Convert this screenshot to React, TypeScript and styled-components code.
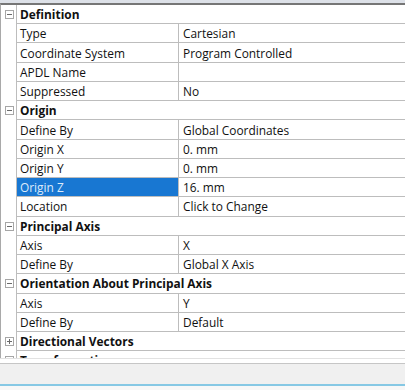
import React from "react";
import styled, { createGlobalStyle } from "styled-components";

const Global = createGlobalStyle`
  html, body { margin: 0; padding: 0; background: #ffffff; }
  * { box-sizing: border-box; }
`;

const Frame = styled.div`
  width: 405px;
  height: 390px;
  display: flex;
  flex-direction: column;
  overflow: hidden;
  font-family: "Open Sans", "Noto Sans", sans-serif;
  font-size: 11.9px;
  color: #111111;
  background: #ffffff;
`;

const TopStrip = styled.div`
  height: 3px;
  flex: none;
  background: #dde1e8;
`;

const Table = styled.div`
  height: 355px;
  flex: none;
  overflow: hidden;
  border-top: 2px solid #767676;
  border-left: 1px solid #a9a9a9;
  display: flex;
  flex-direction: column;
`;

const Row = styled.div`
  display: flex;
  height: 19.24px;
  flex: none;
`;

const Gutter = styled.div`
  width: 15px;
  flex: none;
  display: flex;
  align-items: center;
  justify-content: center;
  padding-left: 2px;
`;

const Toggle = styled.div`
  width: 9px;
  height: 9px;
  border: 1px solid #a6a6a6;
  background: #ffffff;
  position: relative;
  &::before {
    content: "";
    position: absolute;
    left: 1px;
    top: 3px;
    width: 5px;
    height: 1px;
    background: #6a6a6a;
  }
`;

const PlusToggle = styled(Toggle)`
  &::after {
    content: "";
    position: absolute;
    left: 3px;
    top: 1px;
    width: 1px;
    height: 5px;
    background: #6a6a6a;
  }
`;

const Content = styled.div`
  flex: 1;
  display: flex;
  border-left: 1px solid #bdbdbd;
  border-bottom: 1px solid #bdbdbd;
  min-width: 0;
`;

const HeaderText = styled.div`
  font-weight: 700;
  padding-left: 3px;
  display: flex;
  align-items: center;
  white-space: nowrap;
`;

const NameCell = styled.div<{ $selected?: boolean }>`
  width: 162px;
  flex: none;
  border-right: 1px solid #bdbdbd;
  padding-left: 3px;
  display: flex;
  align-items: center;
  white-space: nowrap;
  background: ${(p) => (p.$selected ? "#1877d2" : "transparent")};
  color: ${(p) => (p.$selected ? "#dceafa" : "inherit")};
`;

const ValueCell = styled.div`
  flex: 1;
  padding-left: 4px;
  display: flex;
  align-items: center;
  white-space: nowrap;
`;

const Gap = styled.div`
  height: 5px;
  flex: none;
  background: #ffffff;
  border-top: 1px solid #e2e2e2;
`;

const StatusBar = styled.div`
  height: 23px;
  flex: none;
  background: #f0f0f0;
  border-top: 1px solid #c6c6c6;
  border-bottom: 2px solid #86c8e4;
`;

const Bottom = styled.div`
  flex: 1;
  background: #f7f7f7;
`;

type Item =
  | { kind: "header"; label: string; collapsed?: boolean }
  | { kind: "prop"; name: string; value: string; selected?: boolean };

const items: Item[] = [
  { kind: "header", label: "Definition" },
  { kind: "prop", name: "Type", value: "Cartesian" },
  { kind: "prop", name: "Coordinate System", value: "Program Controlled" },
  { kind: "prop", name: "APDL Name", value: "" },
  { kind: "prop", name: "Suppressed", value: "No" },
  { kind: "header", label: "Origin" },
  { kind: "prop", name: "Define By", value: "Global Coordinates" },
  { kind: "prop", name: "Origin X", value: "0. mm" },
  { kind: "prop", name: "Origin Y", value: "0. mm" },
  { kind: "prop", name: "Origin Z", value: "16. mm", selected: true },
  { kind: "prop", name: "Location", value: "Click to Change" },
  { kind: "header", label: "Principal Axis" },
  { kind: "prop", name: "Axis", value: "X" },
  { kind: "prop", name: "Define By", value: "Global X Axis" },
  { kind: "header", label: "Orientation About Principal Axis" },
  { kind: "prop", name: "Axis", value: "Y" },
  { kind: "prop", name: "Define By", value: "Default" },
  { kind: "header", label: "Directional Vectors", collapsed: true },
  { kind: "header", label: "Transformations", collapsed: true },
];

export default function App() {
  return (
    <>
      <Global />
      <Frame>
        <TopStrip />
        <Table>
          {items.map((it, i) =>
            it.kind === "header" ? (
              <Row key={i}>
                <Gutter>{it.collapsed ? <PlusToggle /> : <Toggle />}</Gutter>
                <Content>
                  <HeaderText>{it.label}</HeaderText>
                </Content>
              </Row>
            ) : (
              <Row key={i}>
                <Gutter />
                <Content>
                  <NameCell $selected={it.selected}>{it.name}</NameCell>
                  <ValueCell>{it.value}</ValueCell>
                </Content>
              </Row>
            )
          )}
        </Table>
        <Gap />
        <StatusBar />
        <Bottom />
      </Frame>
    </>
  );
}
